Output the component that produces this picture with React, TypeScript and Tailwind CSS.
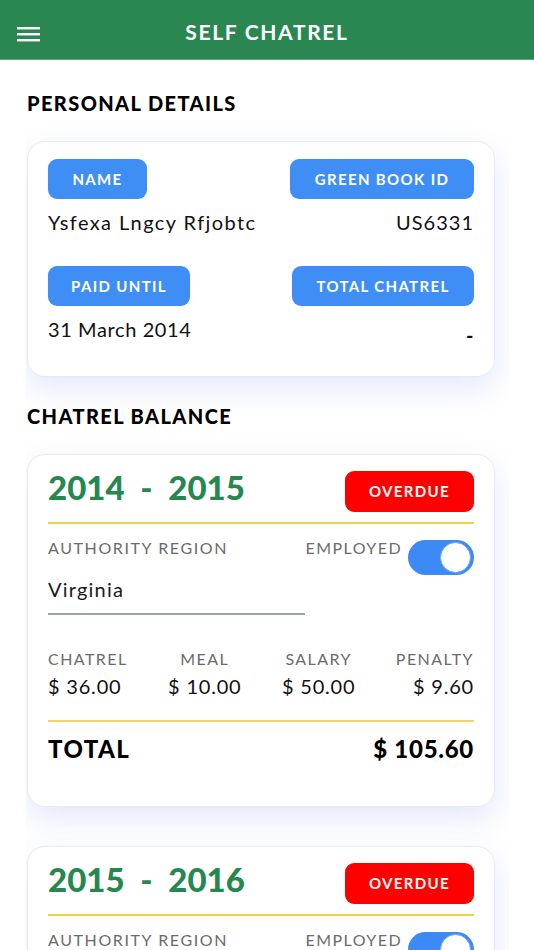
import React from "react";

const font = { fontFamily: "Lato, 'Noto Sans', sans-serif" };

function Pill({ children, className = "" }: { children: React.ReactNode; className?: string }) {
  return (
    <div
      className={`flex h-[40px] items-center justify-center rounded-[9px] bg-[#3f8ef6] text-[15px] font-bold tracking-[0.09em] text-white ${className}`}
    >
      {children}
    </div>
  );
}

function Card({ children }: { children: React.ReactNode }) {
  return (
    <div className="rounded-[18px] border border-[#e8ebf5] bg-white px-[20px] shadow-[0_12px_30px_rgba(90,110,230,0.16)]">
      {children}
    </div>
  );
}

type Year = {
  period: string;
  region: string;
  chatrel: string;
  meal: string;
  salary: string;
  penalty: string;
  total: string;
};

const years: Year[] = [
  { period: "2014  -  2015", region: "Virginia", chatrel: "$ 36.00", meal: "$ 10.00", salary: "$ 50.00", penalty: "$ 9.60", total: "$ 105.60" },
  { period: "2015  -  2016", region: "Virginia", chatrel: "$ 36.00", meal: "$ 10.00", salary: "$ 50.00", penalty: "$ 9.60", total: "$ 105.60" },
];

function YearCard({ y }: { y: Year }) {
  const cols = [
    { label: "CHATREL", value: y.chatrel, align: "items-start" },
    { label: "MEAL", value: y.meal, align: "items-center" },
    { label: "SALARY", value: y.salary, align: "items-center" },
    { label: "PENALTY", value: y.penalty, align: "items-end" },
  ];
  return (
    <Card>
      <div className="flex items-start justify-between pt-[16px]">
        <span className="mt-[-4px] whitespace-pre text-[33px] font-black leading-[40px] text-[#26874f]">
          {y.period}
        </span>
        <div className="flex h-[41px] w-[129px] items-center justify-center rounded-[9px] bg-[#ff0000] text-[15px] font-bold tracking-[0.09em] text-white">
          OVERDUE
        </div>
      </div>
      <div className="mt-[10px] h-[2px] bg-[#f4cf45]" />
      <div className="mt-[12px] flex justify-between">
        <div className="flex w-[257px] flex-col">
          <span className="text-[16px] tracking-[0.1em] text-[#6b6b6b]">AUTHORITY REGION</span>
          <span className="mt-[14px] text-[20px] tracking-[0.06em] text-[#1a1a1a]">{y.region}</span>
          <div className="mt-[9px] h-[2px] bg-[#9ca3af]" />
        </div>
        <div className="flex items-start gap-[6px]">
          <span className="text-[16px] tracking-[0.09em] text-[#6b6b6b]">EMPLOYED</span>
          <div className="relative mt-[4px] h-[35px] w-[66px] rounded-full bg-[#3d8af7]">
            <div className="absolute right-[3px] top-[2px] h-[31px] w-[31px] rounded-full border border-[#6aa6f8] bg-white" />
          </div>
        </div>
      </div>
      <div className="mt-[32px] flex justify-between">
        {cols.map((c) => (
          <div key={c.label} className={`flex flex-col ${c.align}`}>
            <span className="text-[16px] tracking-[0.09em] text-[#6b6b6b]">{c.label}</span>
            <span className="text-[20px] tracking-[0.04em] text-[#111]">{c.value}</span>
          </div>
        ))}
      </div>
      <div className="mt-[19px] h-[2px] bg-[#f4d36a]" />
      <div className="flex items-center justify-between pb-[39px] pt-[9px]">
        <span className="text-[24px] font-black tracking-[0.06em] text-black">TOTAL</span>
        <span className="text-[24px] font-black tracking-[0.03em] text-black">{y.total}</span>
      </div>
    </Card>
  );
}

export default function App() {
  return (
    <div className="h-[950px] overflow-hidden bg-white" style={font}>
      {/* Header */}
      <div className="relative flex h-[60px] items-center justify-center border-b border-[#5aa67a] bg-[#2a8752] pt-[5px]">
        <svg className="absolute left-[17px] top-[26px]" width="24" height="16" viewBox="0 0 24 16">
          <rect x="0" y="1" width="23" height="2.4" fill="#fff" />
          <rect x="0" y="7" width="23" height="2.4" fill="#fff" />
          <rect x="0" y="13" width="23" height="2.4" fill="#fff" />
        </svg>
        <span className="text-[21px] font-bold tracking-[0.08em] text-white">SELF CHATREL</span>
      </div>

      <div className="px-[26px]">
        <div className="w-[483px] overflow-hidden pl-[1px] pr-[14px]">
          <div className="pt-[28px] text-[20px] font-black tracking-[0.07em] text-black">PERSONAL DETAILS</div>

          <div className="mt-[23px]">
            <Card>
              <div className="pb-[26px] pt-[17px]">
                <div className="flex justify-between">
                  <Pill className="w-[99px]">NAME</Pill>
                  <Pill className="w-[184px]">GREEN BOOK ID</Pill>
                </div>
                <div className="mt-[8px] flex justify-between text-[20px] text-[#111]">
                  <span className="tracking-[0.07em]">Ysfexa Lngcy Rfjobtc</span>
                  <span className="tracking-[0.05em]">US6331</span>
                </div>
                <div className="mt-[29px] flex justify-between">
                  <Pill className="w-[142px]">PAID UNTIL</Pill>
                  <Pill className="w-[182px]">TOTAL CHATREL</Pill>
                </div>
                <div className="mt-[8px] flex justify-between text-[20px] tracking-[0.03em] text-[#111]">
                  <span>31 March 2014</span>
                  <span className="pt-[6px] font-bold">-</span>
                </div>
              </div>
            </Card>
          </div>

          <div className="pt-[24px] text-[20px] font-black tracking-[0.07em] text-black">CHATREL BALANCE</div>

          <div className="mt-[23px] flex flex-col gap-[39px] pb-[40px]">
            {years.map((y) => (
              <YearCard key={y.period} y={y} />
            ))}
          </div>
        </div>
      </div>
    </div>
  );
}
